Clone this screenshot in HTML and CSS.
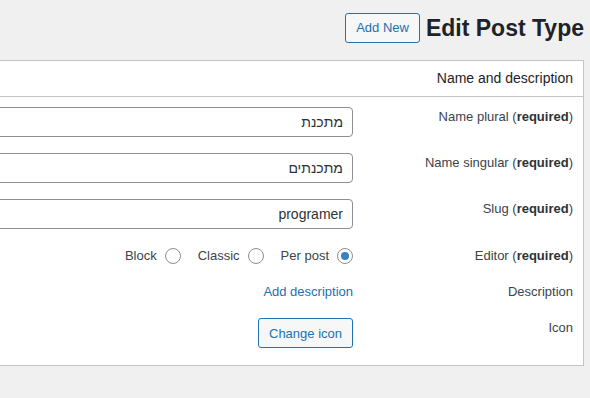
FILE: index.html
```html
<!DOCTYPE html>
<html lang="he" dir="rtl">
<head>
    <meta charset="UTF-8">
    <meta name="viewport" content="width=device-width, initial-scale=1.0">
    <title>Edit Post Type</title>
    <link rel="stylesheet" href="styles.css">
</head>
<body>
    <div class="wrap">
        <div class="page-head">
            <h1>Edit Post Type</h1>
            <a class="page-title-action" href="#">Add New</a>
        </div>

        <div class="postbox">
            <div class="postbox-header">Name and description</div>
            <table class="form-table">
                <tr>
                    <th>Name plural (<strong>required</strong>)</th>
                    <td><input type="text" class="regular-text" value="מתכנת"></td>
                </tr>
                <tr>
                    <th>Name singular (<strong>required</strong>)</th>
                    <td><input type="text" class="regular-text" value="מתכנתים"></td>
                </tr>
                <tr>
                    <th>Slug (<strong>required</strong>)</th>
                    <td><input type="text" class="regular-text" value="programer"></td>
                </tr>
                <tr>
                    <th class="th-low">Editor (<strong>required</strong>)</th>
                    <td>
                        <div class="radio-group">
                            <label><input type="radio" name="editor" checked> Per post</label>
                            <label><input type="radio" name="editor"> Classic</label>
                            <label><input type="radio" name="editor"> Block</label>
                        </div>
                    </td>
                </tr>
                <tr>
                    <th>Description</th>
                    <td><a class="link" href="#">Add description</a></td>
                </tr>
                <tr>
                    <th>Icon</th>
                    <td><button class="button">Change icon</button></td>
                </tr>
            </table>
        </div>
    </div>
</body>
</html>
```

FILE: styles.css
```css
html, body {
    margin: 0;
    background: #f0f0f1;
    overflow: hidden;
}
body {
    font-family: "Liberation Sans", Arial, sans-serif;
    font-size: 13px;
    color: #3c434a;
}
.wrap {
    padding: 13px 6px 0 0;
}
.page-head {
    display: flex;
    align-items: center;
    gap: 6px;
    height: 30px;
}
.page-head h1 {
    margin: 0;
    font-size: 23px;
    font-weight: 700;
    color: #1d2327;
    line-height: 28px;
}
.page-title-action {
    display: inline-block;
    height: 28px;
    line-height: 28px;
    padding: 0 10px;
    border: 1px solid #2271b1;
    border-radius: 3px;
    background: #f6f7f7;
    color: #2271b1;
    text-decoration: none;
    font-size: 13px;
}
.postbox {
    width: 900px;
    margin-top: 17px;
    background: #fff;
    border: 1px solid #c3c4c7;
    padding-bottom: 9px;
}
.postbox-header {
    padding: 8px 10px;
    line-height: 19px;
    font-size: 14px;
    color: #1d2327;
    border-bottom: 1px solid #c3c4c7;
}
.form-table {
    border-collapse: collapse;
    margin-top: 2px;
}
.form-table th {
    width: 210px;
    padding: 8px 10px;
    text-align: right;
    vertical-align: top;
    font-weight: 400;
    line-height: 20px;
    color: #3c434a;
}
.form-table th.th-low {
    padding-top: 9px;
}
.form-table th strong {
    color: #2c3338;
}
.form-table td {
    padding: 8px 0;
    vertical-align: top;
    line-height: 20px;
}
.regular-text {
    display: block;
    box-sizing: border-box;
    width: 420px;
    height: 30px;
    padding: 0 9px;
    border: 1px solid #8c8f94;
    border-radius: 4px;
    font-family: inherit;
    font-size: 14px;
    color: #2c3338;
    background: #fff;
    direction: rtl;
}
.radio-group {
    display: flex;
    gap: 17px;
    height: 20px;
    padding-top: 1px;
    align-items: center;
}
.radio-group label {
    display: flex;
    align-items: center;
    gap: 8px;
    font-size: 13px;
    color: #3c434a;
}
.radio-group input {
    appearance: none;
    -webkit-appearance: none;
    margin: 0;
    width: 16px;
    height: 16px;
    border: 1px solid #8c8f94;
    border-radius: 50%;
    background: #fff;
    display: flex;
    align-items: center;
    justify-content: center;
}
.radio-group input:checked::before {
    content: "";
    width: 8px;
    height: 8px;
    border-radius: 50%;
    background: #3582c4;
}
.link {
    color: #2271b1;
    text-decoration: none;
    font-size: 13px;
}
.button {
    height: 30px;
    padding: 0 10px;
    border: 1px solid #2271b1;
    border-radius: 3px;
    background: #f6f7f7;
    color: #2271b1;
    font-family: inherit;
    font-size: 13px;
    cursor: pointer;
}
```
